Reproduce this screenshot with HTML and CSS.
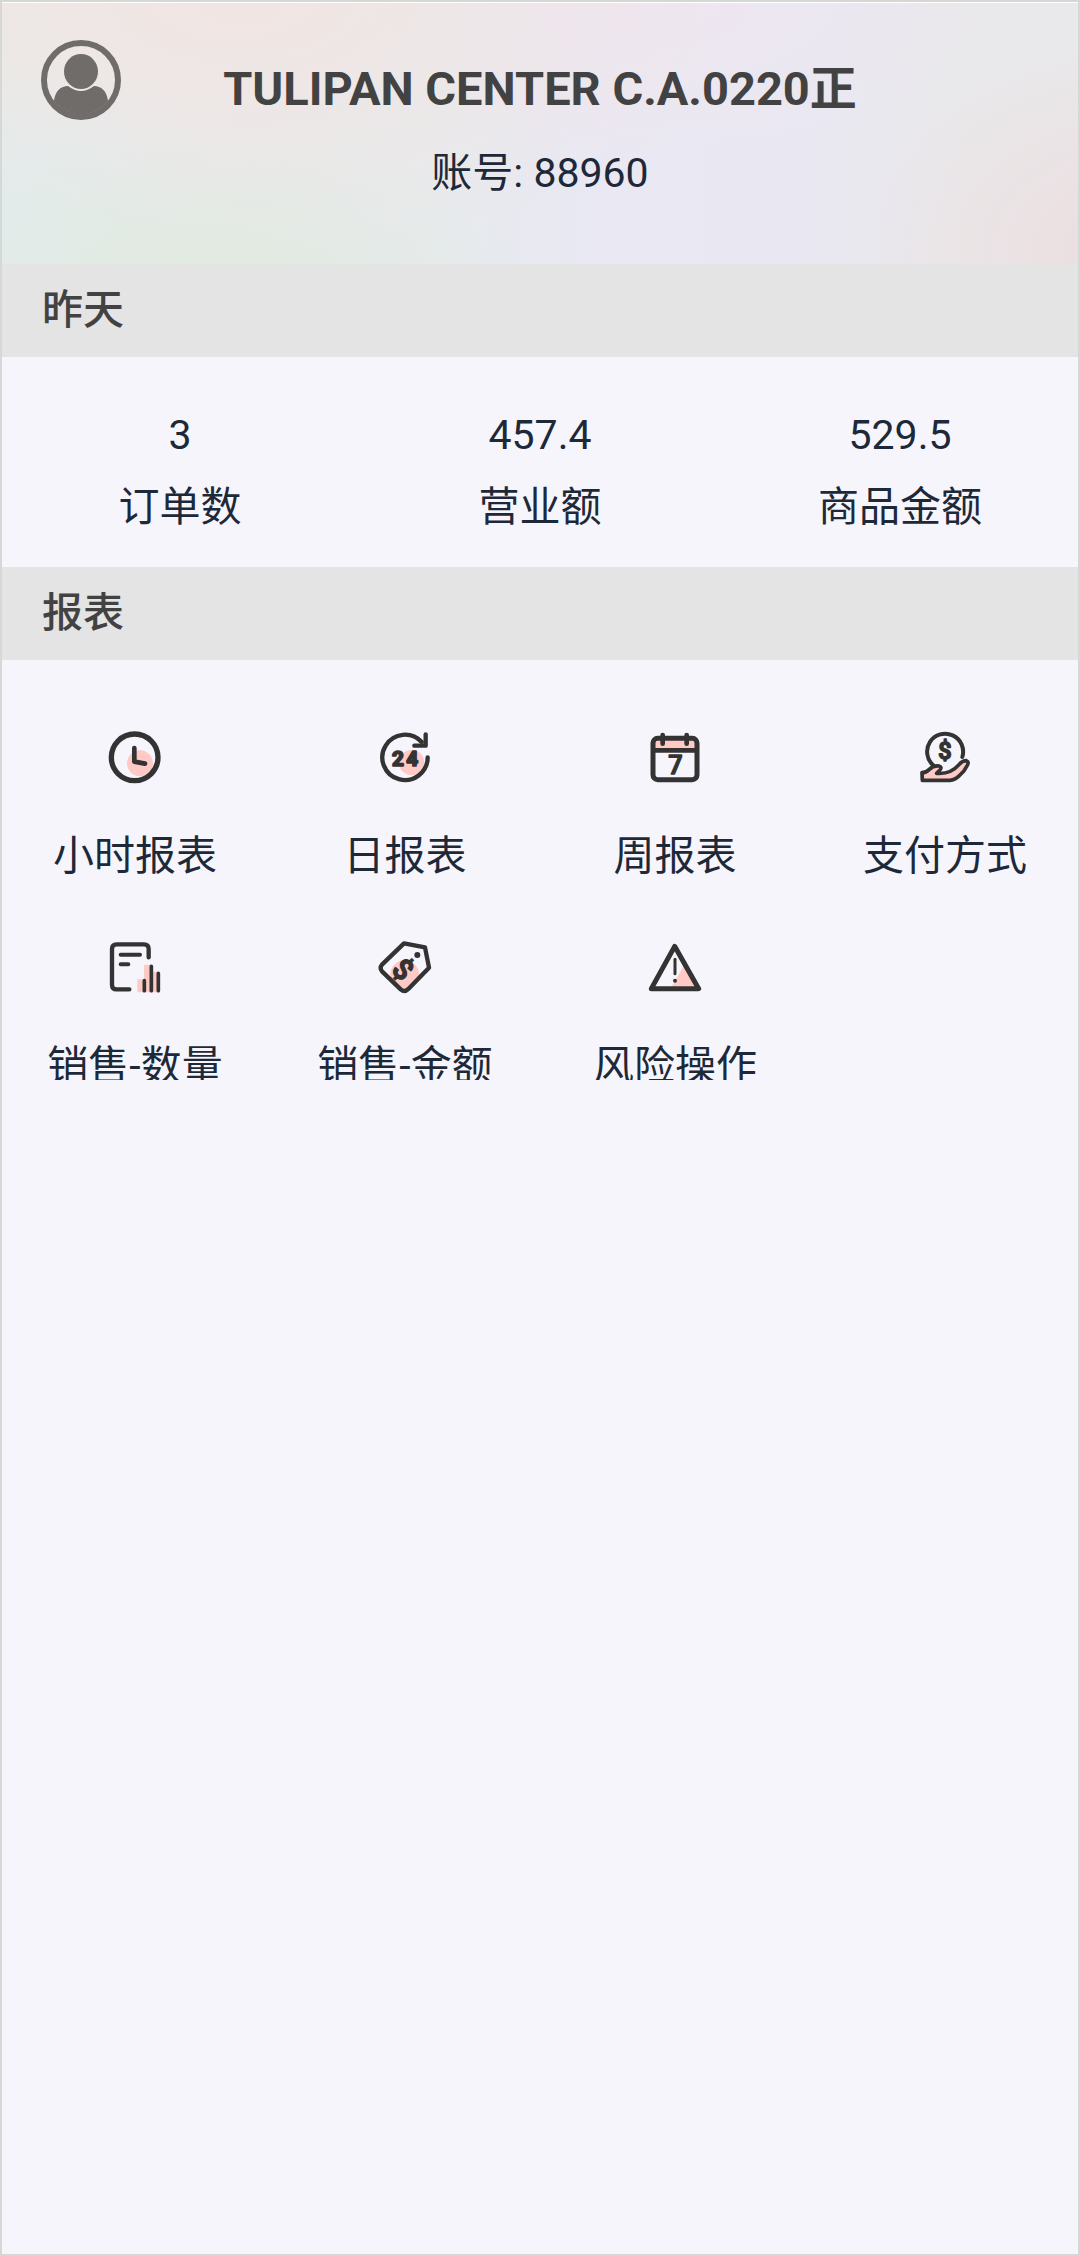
FILE: index.html
```html
<!DOCTYPE html>
<html lang="zh-CN">
<head>
    <meta charset="UTF-8">
    <meta name="viewport" content="width=device-width, initial-scale=1.0">
    <title>报表</title>
    <link rel="stylesheet" href="styles.css">
</head>
<body>
    <header class="profile">
        <button class="avatar" type="button" aria-label="账号">
            <svg viewBox="0 0 80 80">
                <circle cx="40" cy="40" r="37" fill="none" stroke="currentColor" stroke-width="6"/>
                <ellipse cx="40" cy="31.500" rx="17" ry="17.500"/>
                <path d="M13 61C14 51 20 46 27 46Q40 56 53 46C60 46 66 51 67 61A34 34 0 0 1 13 61Z"/>
            </svg>
        </button>
        <div class="profile-info">
            <h1>TULIPAN CENTER C.A.0220正</h1>
            <p>账号: 88960</p>
        </div>
    </header>

    <main>
        <h2 class="section-title">昨天</h2>
        <dl class="stats">
            <div class="stat">
                <dt>订单数</dt>
                <dd>3</dd>
            </div>
            <div class="stat">
                <dt>营业额</dt>
                <dd>457.4</dd>
            </div>
            <div class="stat">
                <dt>商品金额</dt>
                <dd>529.5</dd>
            </div>
        </dl>

        <h2 class="section-title">报表</h2>
        <nav class="reports">
            <a class="report" href="#hour">
                <svg class="icon" viewBox="45 45 180 180">
                    <circle class="tint" cx="150" cy="160" r="39"/>
                    <circle cx="134" cy="142" r="70" stroke-width="16"/>
                    <path d="M133 114V155L165 161" stroke-width="14"/>
                </svg>
                <span>小时报表</span>
            </a>
            <a class="report" href="#day">
                <svg class="icon" viewBox="45 45 180 180">
                    <circle class="tint" cx="155" cy="158" r="38"/>
                    <path d="M203 142A68 68 0 1 1 185 96"/>
                    <path d="M197 73V107H163"/>
                    <text x="114 157" y="167" font-size="62" font-weight="800" stroke-width="5">24</text>
                </svg>
                <span>日报表</span>
            </a>
            <a class="report" href="#week">
                <svg class="icon" viewBox="45 45 180 180">
                    <path class="tint" d="M70 86H201V118H70Z"/>
                    <rect x="69" y="85" width="132" height="124" rx="14" stroke-width="15"/>
                    <path d="M70 121H200M98 75V101M170 75V101" stroke-width="14"/>
                    <text x="136" y="192" font-size="76" font-weight="500" stroke-width="4">7</text>
                </svg>
                <span>周报表</span>
            </a>
            <a class="report" href="#payment">
                <svg class="icon" viewBox="45 45 180 180">
                    <path class="tint" d="M66 190L105 170L122 174L112 192L150 190L200 152L188 185L155 211H66Z"/>
                    <path d="M100 166A54 54 0 1 1 187 141" stroke-width="12"/>
                    <path d="M66 188Q78 188 88 178C98 168 108 167 117 168Q128 171 119 181L110 190C145 193 165 178 177 164Q187 152 199 152Q208 155 202 166Q194 184 178 197Q165 210 150 211H67Z" stroke-width="11"/>
                    <text x="135" y="148" font-size="70" font-weight="500" stroke-width="5">$</text>
                </svg>
                <span>支付方式</span>
            </a>
            <a class="report" href="#sales-count">
                <svg class="icon" viewBox="45 45 180 180">
                    <path class="tint" d="M142 178H162V134H186V155H205V217H142Z"/>
                    <path d="M118 208H80Q66 208 66 194V87Q66 73 80 73H162Q176 73 176 87V112"/>
                    <path d="M92 104H150M92 133H115" stroke-width="12"/>
                    <path d="M163 182V212M184 139V212M205 160V212" stroke-width="11"/>
                </svg>
                <span>销售-数量</span>
            </a>
            <a class="report" href="#sales-amount">
                <svg class="icon" viewBox="45 45 180 180">
                    <circle class="tint" cx="134" cy="164" r="43"/>
                    <path d="M132 70L195 82L207 143L145 207Q134 218 122 208L66 154Q58 144 66 134Z"/>
                    <circle class="dot" cx="172" cy="105" r="9"/>
                    <g transform="rotate(42 129 148)">
                        <text x="129" y="178" font-size="86" font-weight="600" stroke-width="4">$</text>
                    </g>
                </svg>
                <span>销售-金额</span>
            </a>
            <a class="report" href="#risk">
                <svg class="icon" viewBox="45 45 180 180">
                    <path class="tint" d="M162 136L125 200H200Z"/>
                    <path d="M134 79L206 206H64Z" stroke-width="15"/>
                    <path d="M135 118V161" stroke-width="9"/>
                    <circle class="dot" cx="135" cy="182" r="6"/>
                </svg>
                <span>风险操作</span>
            </a>
        </nav>
    </main>
</body>
</html>
```

FILE: styles.css
```css
* {
    box-sizing: border-box;
}

body {
    font-family: Roboto, "Noto Sans CJK SC", sans-serif;
    font-size: 41px;
    line-height: 60px;
    margin: 0;
    min-height: 100vh;
    outline: 2px solid #d6d8d6;
    outline-offset: -2px;
    background-color: #f6f5fc;
    color: #1d2939;
}

h1, h2, p, dl, dd {
    margin: 0;
}

.profile {
    display: grid;
    grid-template-columns: 160px 1fr 160px;
    padding: 40px 0 61px;
    box-shadow: inset 0 3px #fff;
    background:
        radial-gradient(ellipse 24% 75% at 104% 95%, #ecdedf, transparent),
        radial-gradient(ellipse 28% 60% at 20% 108%, #e1eadf, transparent),
        radial-gradient(ellipse 22% 80% at 0% 100%, #e1ebec, transparent),
        radial-gradient(ellipse 48% 95% at 22% 0%, #f1e5e2, transparent),
        radial-gradient(ellipse 30% 60% at 62% 0%, #eee6f1, transparent),
        linear-gradient(90deg, #e8ebea 0%, #e7eaee 42%, #e9e8f3 55%, #e9e8f2 75%, #e9e8ea 90%);
}

.avatar {
    width: 80px;
    height: 80px;
    margin-left: 41px;
    padding: 0;
    border: none;
    background: none;
    color: #706c6a;
    cursor: pointer;
}

.avatar svg {
    display: block;
    fill: currentColor;
}

.profile-info {
    padding-top: 14px;
    text-align: center;
}

.profile-info h1 {
    margin-bottom: 19px;
    font-size: 47px;
    line-height: 70px;
    color: #424242;
}

.section-title {
    padding: 16px 42px 17px;
    background-color: #e4e4e5;
    color: #424242;
    font-size: 41px;
    font-weight: 500;
}

.stats {
    display: flex;
    padding: 48px 0 30px;
}

.stat {
    display: flex;
    flex: 1;
    flex-direction: column-reverse;
    gap: 12px;
    text-align: center;
}

/* two rows tall, anything below is cut off */
.reports {
    display: grid;
    grid-template-columns: repeat(4, 1fr);
    grid-auto-rows: 210px;
    height: 420px;
    padding-top: 50px;
    overflow: hidden;
}

.report {
    display: flex;
    flex-direction: column;
    align-items: center;
    gap: 41px;
    padding-top: 15px;
    color: inherit;
    text-decoration: none;
}

.icon {
    width: 60px;
    height: 60px;
    fill: none;
    stroke: #333;
    stroke-width: 13px;
    stroke-linecap: round;
    stroke-linejoin: round;
}

.icon .tint {
    fill: #ffc9c5;
    stroke: none;
}

.icon .dot {
    fill: #333;
    stroke: none;
}

.icon text {
    fill: #333;
    text-anchor: middle;
}
```
